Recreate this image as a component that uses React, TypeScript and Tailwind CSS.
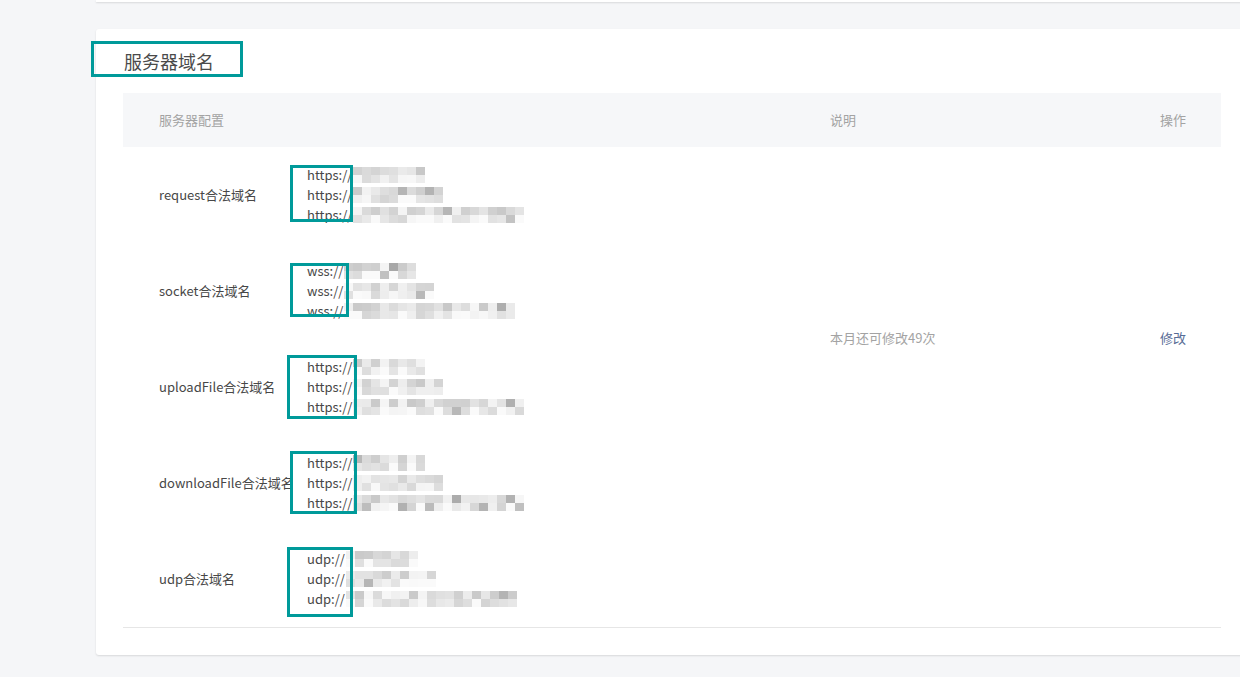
import React from "react";

function makeRand(seed: number) {
  let s = seed;
  return () => {
    s = (s * 9301 + 49297) % 233280;
    return s / 233280;
  };
}

function Mosaic({ seed, blocks }: { seed: number; blocks: number }) {
  const r = makeRand(seed);
  const cells: React.ReactNode[] = [];
  for (let row = 0; row < 2; row++) {
    for (let i = 0; i < blocks; i++) {
      const v = r();
      let g: number;
      if (v < 0.05) g = 165 + Math.floor(r() * 20);
      else g = 200 + Math.floor(r() * 48);
      if (row === 1) g = Math.min(250, g + 12);
      cells.push(
        <rect key={row + "-" + i} x={i * 9} y={row * 8} width={9} height={8} fill={`rgb(${g},${g},${g})`} />
      );
    }
  }
  return (
    <svg width={blocks * 9} height={16} className="inline-block align-middle ml-[1px]" shapeRendering="crispEdges">
      {cells}
    </svg>
  );
}

const rows = [
  { label: "request合法域名", prefix: "https://", lens: [8, 10, 19], box: { left: 167, top: 18, w: 63, h: 57 } },
  { label: "socket合法域名", prefix: "wss://", lens: [8, 10, 19], box: { left: 167, top: 20, w: 59, h: 54 } },
  { label: "uploadFile合法域名", prefix: "https://", lens: [8, 10, 19], box: { left: 164, top: 16, w: 70, h: 64 } },
  { label: "downloadFile合法域名", prefix: "https://", lens: [8, 10, 19], box: { left: 167, top: 16, w: 67, h: 63 } },
  { label: "udp合法域名", prefix: "udp://", lens: [8, 10, 19], box: { left: 164, top: 16, w: 66, h: 70 } },
];

export default function App() {
  return (
    <div className="w-[1240px] h-[677px] overflow-hidden bg-[#f5f6f8] font-['Noto_Sans_CJK_SC','Microsoft_YaHei',sans-serif]">
      <div className="ml-[96px] w-[1160px] h-[2px] bg-white shadow-[0_1px_2px_rgba(0,0,0,0.12)]" />
      <div className="relative ml-[96px] mt-[27px] w-[1160px] bg-white rounded-[3px] shadow-[0_1px_2px_rgba(0,0,0,0.12)] pb-[27px]">
        <div className="h-[64px] flex items-center pl-[28px] text-[18px] text-[#4a4a4a]">服务器域名</div>
        <div className="absolute left-[-5px] top-[12px] w-[152px] h-[36px] border-[3px] border-[#009a9a]" />
        <div className="ml-[27px] w-[1098px] text-[13px]">
          <div className="h-[54px] bg-[#f6f7f9] flex items-center text-[#a3a3a3]">
            <div className="w-[707px] pl-[36px]">服务器配置</div>
            <div className="w-[330px]">说明</div>
            <div className="flex-1">操作</div>
          </div>
          <div className="flex border-b border-[#e6e6e6]">
            <div className="w-[707px]">
              {rows.map((row, idx) => (
                <div key={idx} className="relative h-[96px] flex items-center">
                  <div className="w-[184px] pl-[36px] whitespace-nowrap text-[#474747]">{row.label}</div>
                  <div className="flex flex-col leading-[20px] text-[#474747]">
                    {row.lens.map((len, j) => (
                      <div key={j} className="h-[20px] whitespace-nowrap flex items-center">
                        <span>{row.prefix}</span>
                        <Mosaic seed={idx * 31 + j * 7 + 3} blocks={len} />
                      </div>
                    ))}
                  </div>
                  <div
                    className="absolute border-[3px] border-[#009a9a]"
                    style={{ left: row.box.left, top: row.box.top, width: row.box.w, height: row.box.h }}
                  />
                </div>
              ))}
            </div>
            <div className="w-[330px] pt-[181px] leading-[20px] text-[#a3a3a3]">本月还可修改49次</div>
            <div className="flex-1 pt-[181px] leading-[20px] text-[#576b95]">修改</div>
          </div>
        </div>
      </div>
    </div>
  );
}
